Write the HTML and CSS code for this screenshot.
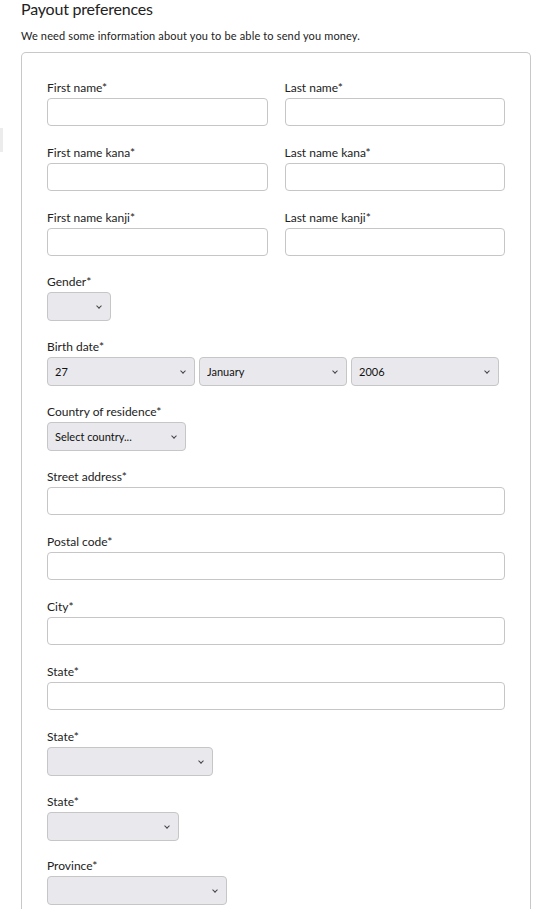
FILE: index.html
```html
<!DOCTYPE html>
<html lang="en">
<head>
<meta charset="utf-8">
<title>Payout preferences</title>
<link rel="stylesheet" href="styles.css">
</head>
<body>
<div class="edge-mark"></div>
<main class="page">
  <h1 class="title">Payout preferences</h1>
  <p class="subtitle">We need some information about you to be able to send you money.</p>
  <form class="card">
    <div class="row two">
      <div class="field"><label>First name*</label><input type="text"></div>
      <div class="field"><label>Last name*</label><input type="text"></div>
    </div>
    <div class="row two">
      <div class="field"><label>First name kana*</label><input type="text"></div>
      <div class="field"><label>Last name kana*</label><input type="text"></div>
    </div>
    <div class="row two tight">
      <div class="field"><label>First name kanji*</label><input type="text"></div>
      <div class="field"><label>Last name kanji*</label><input type="text"></div>
    </div>
    <div class="row srow">
      <label>Gender*</label>
      <div class="sel w-gender"><select><option></option></select></div>
    </div>
    <div class="row srow">
      <label>Birth date*</label>
      <div class="date">
        <div class="sel w-date"><select><option>27</option></select></div>
        <div class="sel w-date"><select><option>January</option></select></div>
        <div class="sel w-date"><select><option>2006</option></select></div>
      </div>
    </div>
    <div class="row srow">
      <label>Country of residence*</label>
      <div class="sel w-country"><select><option>Select country...</option></select></div>
    </div>
    <div class="row"><label>Street address*</label><input type="text"></div>
    <div class="row"><label>Postal code*</label><input type="text"></div>
    <div class="row"><label>City*</label><input type="text"></div>
    <div class="row"><label>State*</label><input type="text"></div>
    <div class="row srow">
      <label>State*</label>
      <div class="sel w-state1"><select><option></option></select></div>
    </div>
    <div class="row srow tight">
      <label>State*</label>
      <div class="sel w-state2"><select><option></option></select></div>
    </div>
    <div class="row srow last">
      <label>Province*</label>
      <div class="sel w-province"><select><option></option></select></div>
    </div>
  </form>
</main>
</body>
</html>
```
FILE: styles.css
```css
* { box-sizing: border-box; }
html, body { margin: 0; padding: 0; background: #fff; }
body {
  font-family: Lato, "Noto Sans", sans-serif;
  color: #222;
  height: 917px;
  overflow: hidden;
}
.edge-mark {
  position: absolute;
  left: 0;
  top: 128px;
  width: 3px;
  height: 24px;
  background: #ececec;
}
.page {
  padding-left: 21px;
  width: 531px;
}
.title {
  margin: 0;
  font-weight: 400;
  font-size: 16px;
  line-height: 18px;
  color: #222;
  letter-spacing: -0.2px;
}
.subtitle {
  margin: 11px 0 0;
  font-size: 11px;
  line-height: 14px;
  color: #222;
  letter-spacing: 0.15px;
}
.card {
  margin-top: 9px;
  border: 1px solid #c8c8c8;
  border-bottom: none;
  border-radius: 5px 5px 0 0;
  padding: 28px 25px 4px;
  height: 857px;
}
.row {
  display: flex;
  flex-direction: column;
  margin-bottom: 20px;
}
.row.srow { margin-bottom: 19px; }
.row.tight { margin-bottom: 19px; }
.row.srow.tight { margin-bottom: 18px; }
.row.last { margin-bottom: 0; }
.row.two {
  flex-direction: row;
  gap: 17px;
}
.field {
  flex: 1;
  display: flex;
  flex-direction: column;
}
label {
  font-size: 12px;
  line-height: 14px;
  margin-bottom: 3px;
  color: #222;
}
input {
  height: 28px;
  width: 100%;
  border: 1px solid #c6c6c6;
  border-radius: 4px;
  background: #fff;
  font: inherit;
  outline: none;
}
.sel {
  position: relative;
  height: 29px;
}
.sel select {
  appearance: none;
  -webkit-appearance: none;
  width: 100%;
  height: 100%;
  border: 1px solid #c6c6c6;
  border-radius: 4px;
  background: #e9e9ed;
  font-family: Lato, "Noto Sans", sans-serif;
  font-size: 11px;
  color: #111;
  padding: 0 0 0 7px;
  margin: 0;
  outline: none;
}
.sel::after {
  content: "";
  position: absolute;
  right: 10px;
  top: 12px;
  width: 3px;
  height: 3px;
  border-right: 1.2px solid #444;
  border-bottom: 1.2px solid #444;
  transform: rotate(45deg);
  pointer-events: none;
}
.date {
  display: flex;
  gap: 4px;
}
.w-gender { width: 64px; }
.w-date { width: 148px; }
.w-country { width: 139px; }
.w-state1 { width: 166px; }
.w-state2 { width: 132px; }
.w-province { width: 180px; }
```
